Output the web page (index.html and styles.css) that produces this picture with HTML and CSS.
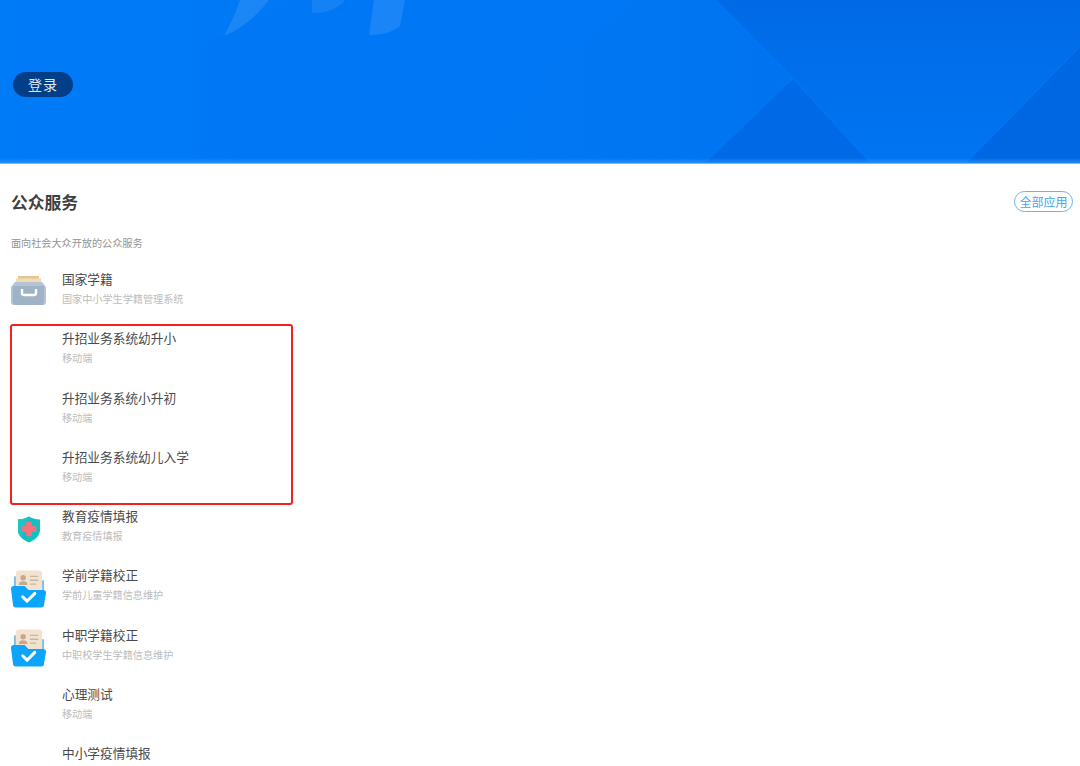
FILE: index.html
```html
<!DOCTYPE html>
<html lang="en">
<head>
    <meta charset="UTF-8">
    <title>公众服务</title>
    <link rel="stylesheet" href="styles.css">
</head>
<body>
    <div class="page">
        <header class="hero">
            <!-- background shapes -->
            <svg class="hero-bg" width="1080" height="163" viewBox="0 0 1080 163">
                <defs>
                    <linearGradient id="heroGrad" x1="0" y1="0" x2="1" y2="0">
                        <stop offset="0" stop-color="#007bf8"/>
                        <stop offset="0.6" stop-color="#0076f2"/>
                        <stop offset="1" stop-color="#0070ec"/>
                    </linearGradient>
                    <linearGradient id="bandGrad" x1="0" y1="0" x2="0" y2="1">
                        <stop offset="0" stop-color="#006ae6"/>
                        <stop offset="1" stop-color="#0075f2"/>
                    </linearGradient>
                    <linearGradient id="fadeGrad" x1="0" y1="0" x2="0" y2="1">
                        <stop offset="0" stop-color="#2f97fb" stop-opacity="0"/>
                        <stop offset="1" stop-color="#2f97fb" stop-opacity="0.7"/>
                    </linearGradient>
                </defs>
                <rect width="1080" height="163" fill="url(#heroGrad)"/>
                <polygon points="716,0 1080,0 1080,45 965,163 870,163 793,77" fill="url(#bandGrad)"/>
                <polygon points="793,79 870,163 705,163" fill="#006ae6"/>
                <polygon points="1080,47 1080,163 967,163" fill="#0067e2"/>
                <path d="M716 0L793 78L870 163M793 78L705 163M1080 46L966 163" fill="none" stroke="#0078f6" stroke-width="1"/>
                <polygon points="200,45 300,0 640,0 560,60 470,163 200,163" fill="#0078f5" opacity="0.5"/>
                <path d="M224 36C245 27 258 14 269 0L240 0C236 12 230 25 224 36Z" fill="#fff" opacity="0.1"/>
                <path d="M312 0L345 0C338 9 326 13 312 13Z" fill="#fff" opacity="0.08"/>
                <path d="M374 0L405 0L400 26C392 33 380 35 369 35Z" fill="#fff" opacity="0.1"/>
                <rect y="158" width="1080" height="5" fill="url(#fadeGrad)"/>
            </svg>
            <button class="login-btn">登录</button>
        </header>

        <main class="section">
            <div class="section-head">
                <h2 class="section-title">公众服务</h2>
                <button class="all-btn">全部应用</button>
            </div>
            <p class="section-desc">面向社会大众开放的公众服务</p>

            <ul class="app-list">
                <li class="app-row">
                    <div class="app-icon">
                        <svg class="icon-tray" width="35" height="29" viewBox="0 0 35 29">
                            <rect x="7" y="0" width="21" height="3" fill="#e3c796"/>
                            <rect x="5" y="2.500" width="25" height="5" fill="#f3dcb4"/>
                            <path d="M4 6H31L35 11V26C35 28 34 29 32 29H3C1 29 0 28 0 26V11Z" fill="#b4c4d4"/>
                            <path d="M2 10H33V26C33 28 32 29 30 29H5C3 29 2 28 2 26Z" fill="#9fb2c6"/>
                            <path d="M11 13V17C11 18 12 19 13 19H23C24 19 25 18 25 17V13" fill="none" stroke="#fff" stroke-width="2.400"/>
                        </svg>
                    </div>
                    <div class="app-text">
                        <div class="app-name">国家学籍</div>
                        <div class="app-sub">国家中小学生学籍管理系统</div>
                    </div>
                </li>
                <li class="app-row">
                    <div class="app-icon"></div>
                    <div class="app-text">
                        <div class="app-name">升招业务系统幼升小</div>
                        <div class="app-sub">移动端</div>
                    </div>
                </li>
                <li class="app-row">
                    <div class="app-icon"></div>
                    <div class="app-text">
                        <div class="app-name">升招业务系统小升初</div>
                        <div class="app-sub">移动端</div>
                    </div>
                </li>
                <li class="app-row">
                    <div class="app-icon"></div>
                    <div class="app-text">
                        <div class="app-name">升招业务系统幼儿入学</div>
                        <div class="app-sub">移动端</div>
                    </div>
                </li>
                <li class="app-row">
                    <div class="app-icon">
                        <svg width="22" height="27" viewBox="0 0 23 27">
                            <path d="M11.500 0C15 2 19 3 23 3V14C23 20 18 24.500 11.500 27C5 24.500 0 20 0 14V3C4 3 8 2 11.500 0Z" fill="#13bfc0"/>
                            <path d="M11.500 0C8 2 4 3 0 3V14C0 17 1 19 3 21Z" fill="#1bc6c4"/>
                            <path d="M9 6H14V10.500H18.500V15.500H14V20H9V15.500H4.500V10.500H9Z" fill="#f8717d" stroke="#f8717d" stroke-width="1" stroke-linejoin="round"/>
                        </svg>
                    </div>
                    <div class="app-text">
                        <div class="app-name">教育疫情填报</div>
                        <div class="app-sub">教育疫情填报</div>
                    </div>
                </li>
                <li class="app-row">
                    <div class="app-icon">
                        <svg width="36" height="38" viewBox="0 0 36 38">
                            <path d="M3 6H8V20H3Z" fill="#7dbde8"/>
                            <path d="M5 3C5 1 6 0 8 0H29C31 0 32 1 32 3V22H5Z" fill="#f2e2d0"/>
                            <circle cx="12.500" cy="7.500" r="2.800" fill="#c9a88a"/>
                            <path d="M8 15C8 12 10 11 12.500 11C15 11 17 12 17 15Z" fill="#c9a88a"/>
                            <path d="M19.500 6H28M19.500 10H28M19.500 14H26" stroke="#c9b6a2" stroke-width="1.400"/>
                            <path d="M32 10H34V22H32Z" fill="#7dbde8"/>
                            <path d="M3 16H14L18 20H33C35 20 36 21 36 23L34 35C34 37 33 38 31 38H5C3 38 2 37 2 35L0 19C0 17 1 16 3 16Z" fill="#0da4fb"/>
                            <path d="M12 27L16.500 31.500L24.500 23.500" fill="none" stroke="#fff" stroke-width="3" stroke-linecap="round" stroke-linejoin="round"/>
                        </svg>
                    </div>
                    <div class="app-text">
                        <div class="app-name">学前学籍校正</div>
                        <div class="app-sub">学前儿童学籍信息维护</div>
                    </div>
                </li>
                <li class="app-row">
                    <div class="app-icon">
                        <svg width="36" height="38" viewBox="0 0 36 38">
                            <path d="M3 6H8V20H3Z" fill="#7dbde8"/>
                            <path d="M5 3C5 1 6 0 8 0H29C31 0 32 1 32 3V22H5Z" fill="#f2e2d0"/>
                            <circle cx="12.500" cy="7.500" r="2.800" fill="#c9a88a"/>
                            <path d="M8 15C8 12 10 11 12.500 11C15 11 17 12 17 15Z" fill="#c9a88a"/>
                            <path d="M19.500 6H28M19.500 10H28M19.500 14H26" stroke="#c9b6a2" stroke-width="1.400"/>
                            <path d="M32 10H34V22H32Z" fill="#7dbde8"/>
                            <path d="M3 16H14L18 20H33C35 20 36 21 36 23L34 35C34 37 33 38 31 38H5C3 38 2 37 2 35L0 19C0 17 1 16 3 16Z" fill="#0da4fb"/>
                            <path d="M12 27L16.500 31.500L24.500 23.500" fill="none" stroke="#fff" stroke-width="3" stroke-linecap="round" stroke-linejoin="round"/>
                        </svg>
                    </div>
                    <div class="app-text">
                        <div class="app-name">中职学籍校正</div>
                        <div class="app-sub">中职校学生学籍信息维护</div>
                    </div>
                </li>
                <li class="app-row">
                    <div class="app-icon"></div>
                    <div class="app-text">
                        <div class="app-name">心理测试</div>
                        <div class="app-sub">移动端</div>
                    </div>
                </li>
                <li class="app-row">
                    <div class="app-icon"></div>
                    <div class="app-text">
                        <div class="app-name">中小学疫情填报</div>
                    </div>
                </li>
            </ul>

            <!-- red annotation round the three rows -->
            <div class="highlight-box"></div>
        </main>
    </div>
</body>
</html>
```

FILE: styles.css
```css
html, body {
    margin: 0;
    padding: 0;
    background: #fff;
}

body {
    font-family: "Noto Sans CJK SC", "Liberation Sans", sans-serif;
}

.page {
    height: 100vh;
    overflow: hidden;
}

/* Blue banner */
.hero {
    position: relative;
    height: 91px;
    border-bottom: 1px solid #7fbbf7;
    display: flex;
    align-items: flex-start;
    padding: 72px 0 0 13px;
}

.hero-bg {
    position: absolute;
    left: 0;
    top: 0;
}

.login-btn {
    position: relative;
    width: 60px;
    height: 25px;
    margin: 0;
    padding: 0;
    border: none;
    border-radius: 13px;
    background-color: #023f88;
    color: #e3e9f2;
    font-family: inherit;
    font-size: 14px;
    line-height: 25px;
    letter-spacing: 1px;
}

/* Section */
.section {
    position: relative;
    padding-top: 27px;
}

.section-head {
    display: flex;
    justify-content: space-between;
    align-items: center;
    padding: 0 7px 0 11px;
    height: 21px;
}

.section-title {
    margin: 2px 0 0;
    font-size: 16.8px;
    font-weight: 700;
    line-height: 21px;
    color: #3f3f3f;
}

.all-btn {
    width: 59px;
    height: 21px;
    margin: 0;
    padding: 0;
    border: 1px solid #6cb1f8;
    border-radius: 11px;
    background: #fff;
    color: #4a9ff6;
    font-family: inherit;
    font-size: 12px;
    line-height: 19px;
}

.section-desc {
    margin: 24px 0 15px;
    padding-left: 11px;
    font-size: 10.15px;
    line-height: 14px;
    color: #949494;
}

/* App rows */
.app-list {
    list-style: none;
    margin: 0;
    padding: 0 0 0 11px;
}

.app-row {
    display: flex;
    gap: 16px;
    height: 59.25px;
}

.app-icon {
    width: 35px;
    height: 55px;
    display: flex;
    justify-content: center;
    align-items: center;
    flex-shrink: 0;
}

.icon-tray {
    margin-bottom: 5px;
}

.app-text {
    padding-top: 6px;
}

.app-name {
    font-size: 12.7px;
    line-height: 16px;
    color: #4a4a4a;
}

.app-sub {
    margin-top: 5px;
    font-size: 10.15px;
    line-height: 14px;
    color: #bcbcbc;
}

.highlight-box {
    position: absolute;
    left: 10px;
    top: 160px;
    width: 283px;
    height: 181px;
    box-sizing: border-box;
    border: 2px solid #f5201c;
    border-radius: 3px;
}
```
